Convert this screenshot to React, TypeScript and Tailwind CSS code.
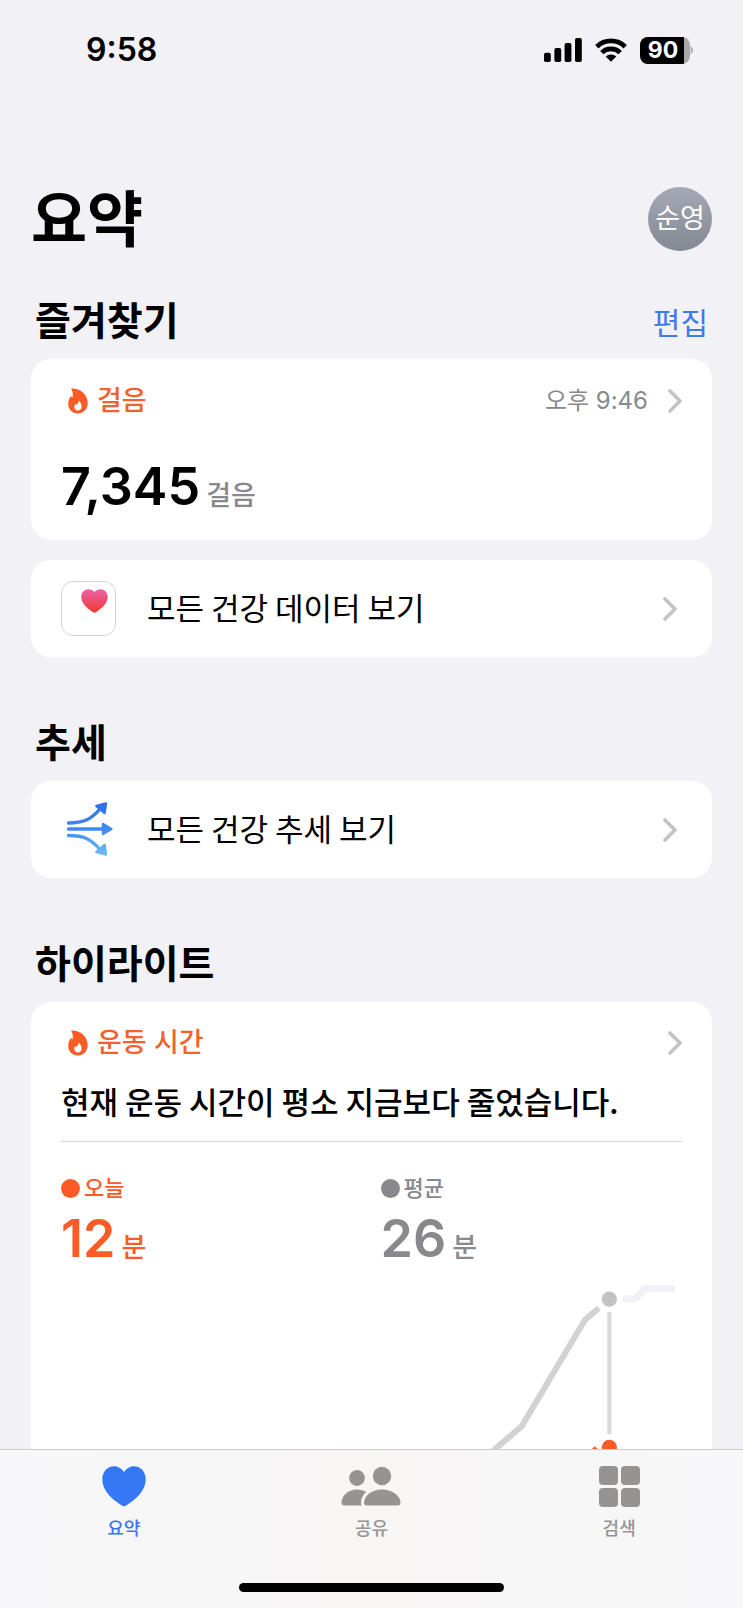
import React from 'react';

interface IconProps {
  className?: string;
}

interface MetricProps {
  label: string;
  value: string;
  unit: string;
  color: 'orange' | 'gray';
}

const metricStyles = {
  orange: { text: 'text-[#fc5b26]', dot: 'bg-[#fc5b26]' },
  gray: { text: 'text-[#89898d]', dot: 'bg-[#89898d]' },
};

const SignalIcon = () => (
  <svg width="38" height="24" viewBox="0 0 38 24" aria-hidden="true">
    <rect x="0" y="14.7" width="6.8" height="9.3" rx="1.8" />
    <rect x="10.4" y="10" width="6.8" height="14" rx="1.8" />
    <rect x="20.6" y="5" width="6.8" height="19" rx="1.8" />
    <rect x="31" y="0" width="6.8" height="24" rx="1.8" />
  </svg>
);

const WifiIcon = () => (
  <svg width="32" height="24" viewBox="0 0 32 24" aria-hidden="true">
    <g fill="none" stroke="#000" strokeWidth="4.8">
      <path d="M1.8 8.7a20.4 20.4 0 0 1 28.4 0" />
      <path d="M6.8 14.6a13.2 13.2 0 0 1 18.4 0" />
    </g>
    <path d="M16 23.8 10.7 18.6a7.6 7.6 0 0 1 10.6 0z" />
  </svg>
);

const Battery = () => (
  <div className="flex items-center">
    <div className="flex h-[27px] w-[50px] overflow-hidden rounded-lg bg-[#a9a9ad]">
      <span className="flex w-11 items-center justify-center bg-black pl-0.5 text-[23px] font-bold text-white">90</span>
    </div>
    <svg width="3" height="8" viewBox="0 0 3 8" aria-hidden="true">
      <path d="M.5 0c3.5 1.6 3.5 6.4 0 8z" fill="#b4b4b8" />
    </svg>
  </div>
);

const FlameIcon = () => (
  <svg width="20" height="26" viewBox="0 0 20 26" aria-hidden="true">
    <path
      fill="#fc5b26"
      fillRule="evenodd"
      d="M3 .5C11.5-.1 19.7 6 19.7 15c0 6.200-4.200 10.400-9.900 10.400S.2 21.600.2 15.800c0-3 .9-5.400 2.500-7.600l2 1C5 6 4.800 3.200 3 .5zM10.600 12.600c.2 2-1 3-1.600 4.200l-1.400-.9c-1 1.100-1.300 2-1.300 3 0 2.100 1.500 3.500 3.600 3.500s3.700-1.400 3.700-3.700c0-2.400-1.100-4.500-3-6.100z"
    />
  </svg>
);

const Chevron = () => (
  <svg className="shrink-0" width="14" height="24" viewBox="0 0 14 24" fill="none" aria-hidden="true">
    <path d="m2 2 10 10L2 22" stroke="#c3c3c6" strokeWidth="3.6" strokeLinecap="round" strokeLinejoin="round" />
  </svg>
);

const HealthIcon = () => (
  <div className="flex size-[55px] justify-center rounded-xl border border-[#d4d4d6] pt-[7px] pl-3">
    <svg width="27" height="24" viewBox="0 0 27 24" aria-hidden="true">
      <defs>
        <linearGradient id="health" x1="0" y1="0" x2="0" y2="1">
          <stop offset="0" stopColor="#ec62ad" />
          <stop offset="1" stopColor="#f03a2c" />
        </linearGradient>
      </defs>
      <path
        fill="url(#health)"
        d="M13.5 3C11.8 1.2 9.8.3 7.5.3 3.4.3.3 3.6.3 8c0 6.200 5 10.600 11.700 15.200.9.6 2.100.6 3 0C21.700 18.600 26.700 14.200 26.700 8c0-4.400-3.100-7.700-7.200-7.700-2.300 0-4.300.9-6 2.700z"
      />
    </svg>
  </div>
);

const TrendsIcon = () => (
  <svg width="55" height="55" viewBox="0 0 55 55" aria-hidden="true">
    <defs>
      <linearGradient id="trends" gradientUnits="userSpaceOnUse" x1="0" y1="1" x2="0" y2="54">
        <stop offset="0" stopColor="#2f6fe8" />
        <stop offset=".5" stopColor="#3f8bf2" />
        <stop offset="1" stopColor="#71bdf8" />
      </linearGradient>
    </defs>
    <g fill="none" stroke="url(#trends)" strokeWidth="3.4" strokeLinecap="round">
      <path d="M7.5 21c15 0 22-3 32-14.5" />
      <path d="M7.5 27 43 27" />
      <path d="M7.5 33.5c15 0 22 3 32 14.5" />
    </g>
    <g fill="url(#trends)" stroke="url(#trends)" strokeWidth="2.4" strokeLinejoin="round">
      <path d="m45 1.5-1.4 9.500-8.200-7z" />
      <path d="m50.5 27-8.500 5v-10z" />
      <path d="m45 52.5-1.4-9.500-8.200 7z" />
    </g>
  </svg>
);

const HeartIcon: React.FC<IconProps> = ({ className }) => (
  <svg className={className} width="44" height="41" viewBox="0 0 44 41" fill="currentColor" aria-hidden="true">
    <path d="M22 6C19.5 2.2 15.9.3 12 .3 5.2.3.3 5.9.3 13.5c0 10.500 8.700 19.300 20 26.300 1.200.7 2.200.7 3.400 0 11.300-7 20-15.800 20-26.300C43.7 5.9 38.8.3 32 .3c-3.900 0-7.500 1.900-10 5.700z" />
  </svg>
);

const PeopleIcon: React.FC<IconProps> = ({ className }) => (
  <svg className={className} width="60" height="41" viewBox="0 0 60 41" fill="currentColor" aria-hidden="true">
    <circle cx="16" cy="12" r="7.9" />
    <circle cx="41" cy="10" r="9.2" />
    <path d="M3.5 39.5c-2 0-3-1-3-2.800 0-6.200 6-13.200 15.500-13.200 3.800 0 6.700.9 9.200 2.500-3.300 2.900-5.200 6.700-5.200 10.700 0 1 .2 2 .8 2.800z" />
    <path d="M26 39.5c-2.200 0-3-1-3-2.800 0-6.200 7-13.200 18-13.200s18.500 7 18.500 13.200c0 1.800-.8 2.800-3 2.800z" />
  </svg>
);

const GridIcon: React.FC<IconProps> = ({ className }) => (
  <svg className={className} width="41" height="41" viewBox="0 0 41 41" fill="currentColor" aria-hidden="true">
    <rect width="19" height="19" rx="4" />
    <rect x="22" width="19" height="19" rx="4" />
    <rect y="22" width="19" height="19" rx="4" />
    <rect x="22" y="22" width="19" height="19" rx="4" />
  </svg>
);

const SectionTitle: React.FC<{ children: React.ReactNode }> = ({ children }) => (
  <h2 className="text-[39px] leading-[60px] font-bold">{children}</h2>
);

const LinkCard: React.FC<{ icon: React.ReactNode; label: string }> = ({ icon, label }) => (
  <a href="#" className="flex h-[97px] items-center rounded-[20px] bg-white pr-[35px] pl-[30px]">
    {icon}
    <span className="ml-[31px] flex-1 pb-1 font-['Noto_Sans_CJK_KR',sans-serif] text-[31px] leading-[44px]">
      {label}
    </span>
    <Chevron />
  </a>
);

const CardHeader: React.FC<{ title: string; time?: string }> = ({ title, time }) => (
  <div className="flex h-10 items-center pl-[7px]">
    <FlameIcon />
    <h3 className="ml-[9px] flex-1 text-[27px] font-medium text-[#f0622f]">{title}</h3>
    {time && <span className="mr-5 text-2xl text-[#89898d]">{time}</span>}
    <Chevron />
  </div>
);

const Metric: React.FC<MetricProps> = ({ label, value, unit, color }) => {
  const styles = metricStyles[color];

  return (
    <div className={styles.text}>
      <div className="flex h-[34px] items-center gap-1">
        <span className={`size-[19px] rounded-full ${styles.dot}`}></span>
        <span className="text-[22px] font-medium">{label}</span>
      </div>
      <div className="flex items-baseline gap-1.5 leading-[68px]">
        <span className="text-[52px] font-semibold">{value}</span>
        <span className="text-[27px] font-medium">{unit}</span>
      </div>
    </div>
  );
};

const ExerciseChart = () => (
  <svg className="w-full" viewBox="0 12 620 240" fill="none" aria-hidden="true">
    <path d="M370 228 432 180 460 156 523 50 537 38" stroke="#d1d1d6" strokeWidth="6" strokeLinejoin="round" />
    <path d="M561 29h12l10-10.5h30" stroke="#f0f0f6" strokeWidth="7" strokeLinejoin="round" />
    <path d="M547.5 42v122" stroke="#d9d9dc" strokeWidth="4" />
    <path d="M500 212 520 194 535 178" stroke="#fc5b26" strokeWidth="6" />
    <circle cx="547.5" cy="29" r="7.6" fill="#c2c2c4" />
    <circle cx="547.5" cy="177" r="7.6" fill="#fc5b26" />
  </svg>
);

const tabs = [
  { label: '요약', icon: HeartIcon, active: true },
  { label: '공유', icon: PeopleIcon, active: false },
  { label: '검색', icon: GridIcon, active: false },
];

export default function App() {
  return (
    <div className="flex h-screen flex-col bg-[#f1f1f6] font-['Inter','Noto_Sans_CJK_KR',sans-serif] text-black">
      <header className="flex h-[100px] shrink-0 items-center justify-between pr-[50px] pl-[86px]">
        <span className="text-[32px] font-semibold">9:58</span>
        <div className="flex items-center gap-[13px]">
          <SignalIcon />
          <WifiIcon />
          <Battery />
        </div>
      </header>

      <main className="min-h-0 flex-1 overflow-hidden px-[31px] pt-[87px]">
        <div className="flex h-16 items-center justify-between">
          <h1 className="pt-1 text-[61px] font-bold">요약</h1>
          <button
            type="button"
            className="size-16 rounded-full bg-linear-to-b from-[#a5a9b5] to-[#848893] text-[27px] text-white"
          >
            순영
          </button>
        </div>

        <section className="mt-10">
          <div className="mb-2 flex items-center justify-between px-1">
            <SectionTitle>즐겨찾기</SectionTitle>
            <button type="button" className="pt-1 text-[30px] text-[#3d7be6]">
              편집
            </button>
          </div>
          <a href="#" className="block h-[181px] rounded-[20px] bg-white px-[30px] pt-[22px]">
            <CardHeader title="걸음" time="오후 9:46" />
            <div className="mt-8 flex items-baseline gap-1.5 leading-[68px]">
              <span className="text-[52px] font-semibold">7,345</span>
              <span className="text-[27px] font-medium text-[#89898d]">걸음</span>
            </div>
          </a>
          <div className="mt-5">
            <LinkCard icon={<HealthIcon />} label="모든 건강 데이터 보기" />
          </div>
        </section>

        <section className="mt-14">
          <div className="mb-2 px-1">
            <SectionTitle>추세</SectionTitle>
          </div>
          <LinkCard icon={<TrendsIcon />} label="모든 건강 추세 보기" />
        </section>

        <section className="mt-14">
          <div className="mb-2 px-1">
            <SectionTitle>하이라이트</SectionTitle>
          </div>
          <a href="#" className="block rounded-t-[20px] bg-white px-[30px] pt-[21px]">
            <CardHeader title="운동 시간" />
            <p className="mt-4 border-b border-[#d8d8da] pb-[18px] font-['Noto_Sans_CJK_KR',sans-serif] text-[31px] leading-[44px] font-medium">
              현재 운동 시간이 평소 지금보다 줄었습니다.
            </p>
            <div className="mt-[29px] grid grid-cols-2 gap-[18px]">
              <Metric label="오늘" value="12" unit="분" color="orange" />
              <Metric label="평균" value="26" unit="분" color="gray" />
            </div>
            <ExerciseChart />
          </a>
        </section>
      </main>

      <nav className="shrink-0 border-t border-[#cbcbce] bg-linear-to-r from-[#f7f7f9] via-[#f8f6f5] to-[#f7f7f9] pt-4 pb-4">
        <div className="grid grid-cols-3">
          {tabs.map(({ label, icon: Icon, active }) => (
            <a
              key={label}
              href="#"
              className={`flex flex-col items-center gap-2 ${active ? 'text-[#3478f6]' : 'text-[#969492]'}`}
            >
              <Icon />
              <span className="text-lg font-medium">{label}</span>
            </a>
          ))}
        </div>
        <div className="mx-auto mt-10 h-[9px] w-[265px] rounded-full bg-black"></div>
      </nav>
    </div>
  );
}
